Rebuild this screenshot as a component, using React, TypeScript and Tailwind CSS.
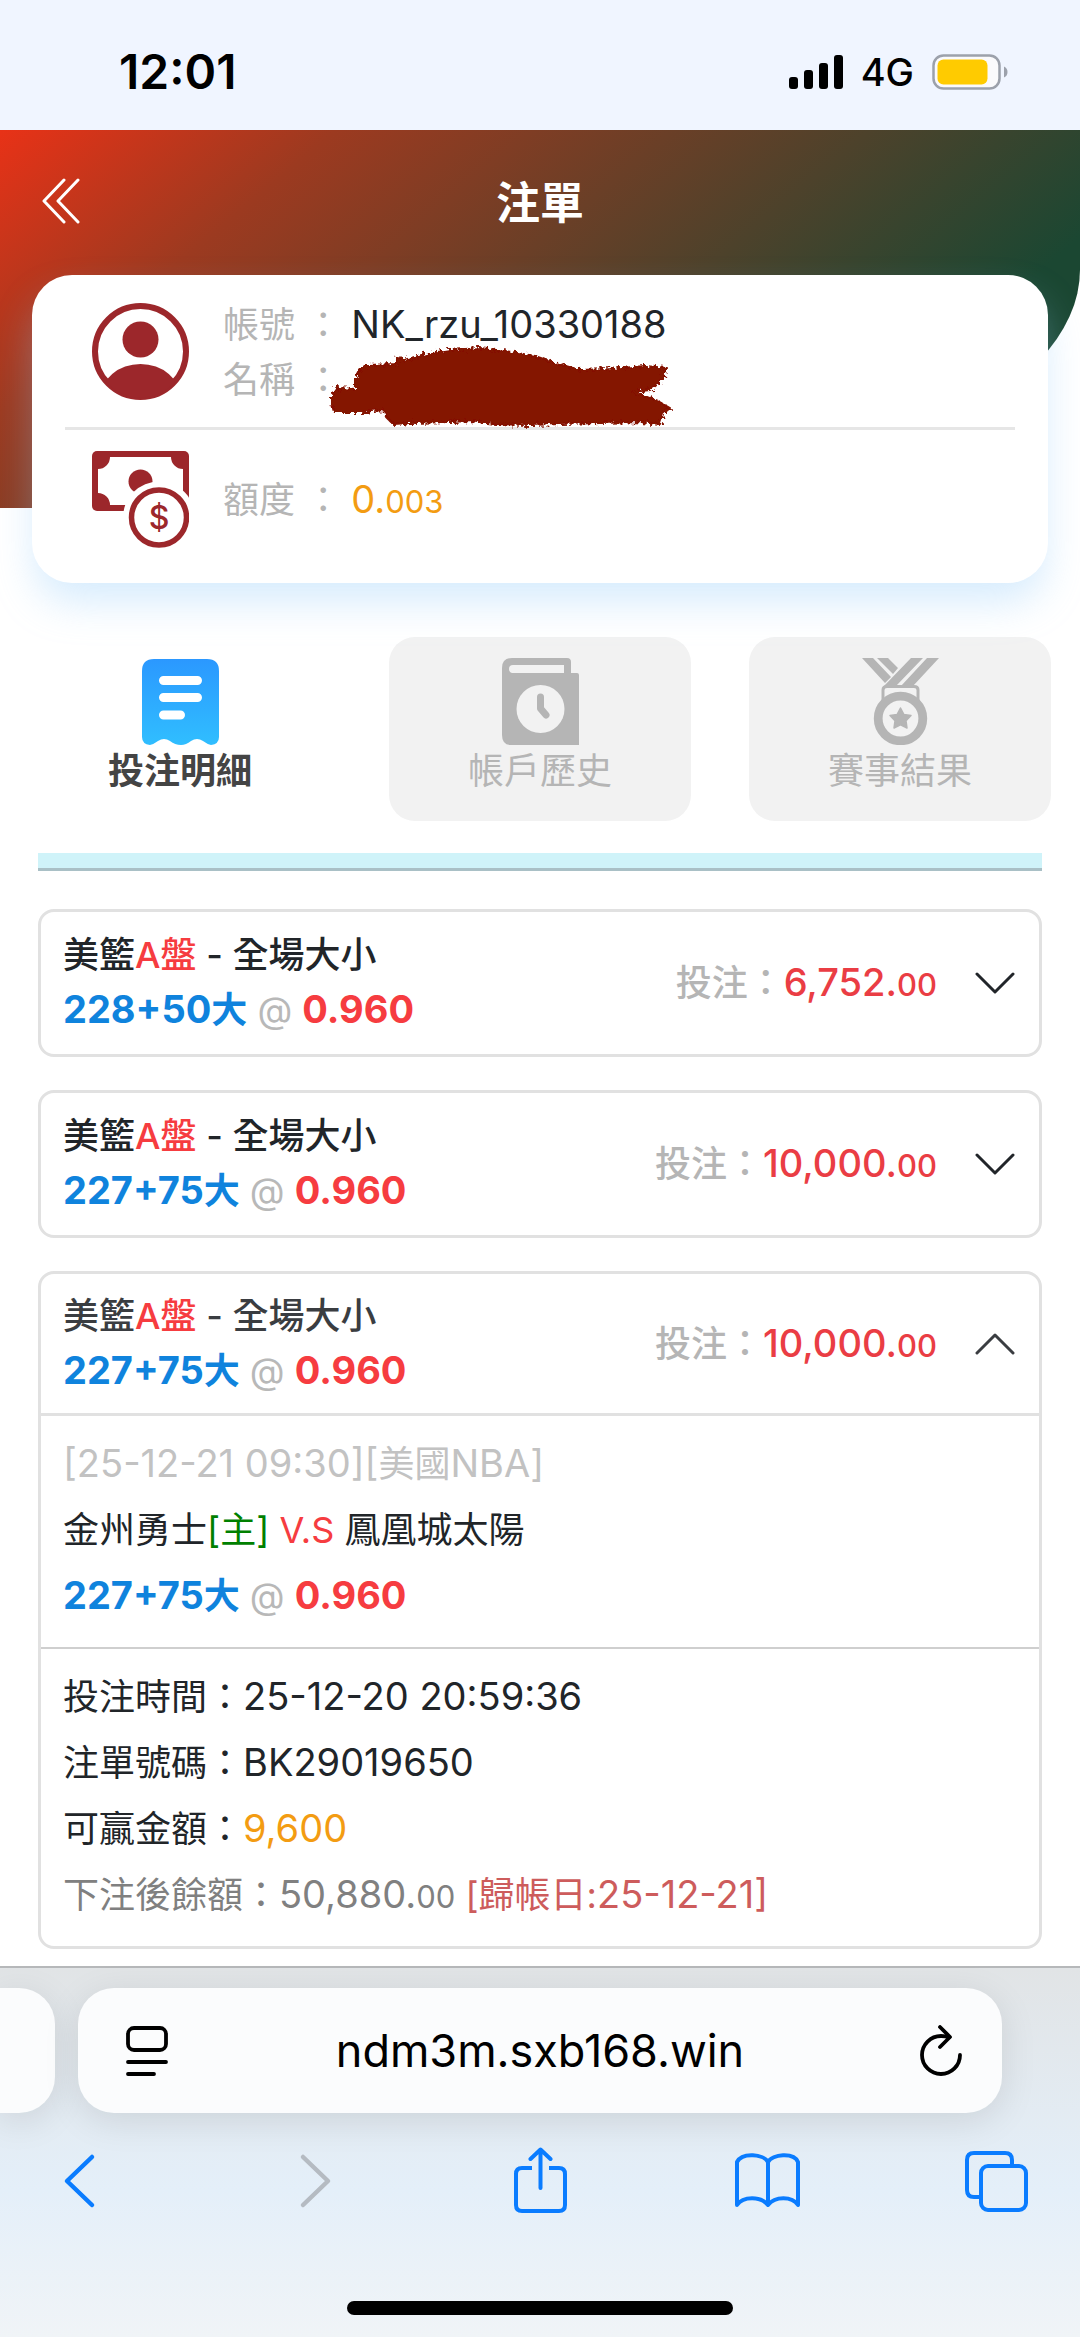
import { useState, type ReactNode } from "react";

const tabs = [
  { id: "detail", label: "投注明細", icon: ReceiptIcon },
  { id: "history", label: "帳戶歷史", icon: HistoryIcon },
  { id: "result", label: "賽事結果", icon: MedalIcon },
];

const bets = [
  { id: 1, line: "228+50", odds: "0.960", amount: "6,752" },
  { id: 2, line: "227+75", odds: "0.960", amount: "10,000" },
  { id: 3, line: "227+75", odds: "0.960", amount: "10,000" },
];

function UserIcon() {
  return (
    <svg viewBox="0 0 97 97" className="size-[97px] shrink-0" aria-hidden="true">
      <clipPath id="user-clip">
        <circle cx="48.5" cy="48.5" r="46" />
      </clipPath>
      <circle cx="48.5" cy="48.5" r="45.5" fill="none" stroke="#9c272b" strokeWidth="6" />
      <circle cx="48.5" cy="36.5" r="18" fill="#9c272b" />
      <ellipse cx="48.5" cy="95" rx="40" ry="34" fill="#9c272b" clipPath="url(#user-clip)" />
    </svg>
  );
}

function MoneyIcon() {
  return (
    <svg viewBox="0 0 97 97" className="size-[97px] shrink-0" aria-hidden="true">
      <rect width="97" height="60" rx="5" fill="#9c272b" />
      <path d="M18 6H79A12 12 0 0 0 91 18V42A12 12 0 0 0 79 54H18A12 12 0 0 0 6 42V18A12 12 0 0 0 18 6Z" fill="#fff" />
      <circle cx="48.5" cy="30.5" r="12" fill="#9c272b" />
      <circle cx="67" cy="66.5" r="36" fill="#fff" />
      <circle cx="67" cy="66.5" r="27.5" fill="#fff" stroke="#9c272b" strokeWidth="5.5" />
      <text x="67" y="78" textAnchor="middle" fontSize="32" fontWeight="500" fill="#9c272b">$</text>
    </svg>
  );
}

function ReceiptIcon() {
  return (
    <svg viewBox="0 0 77 87" className="h-[87px] w-[77px]" aria-hidden="true">
      <defs>
        <linearGradient id="receipt" x1="0" y1="0" x2="0" y2="1">
          <stop offset="0" stopColor="#2b98ff" />
          <stop offset="1" stopColor="#30beff" />
        </linearGradient>
      </defs>
      <path
        d="M0 13Q0 1 12 1H65Q77 1 77 13V79Q77 86 69 87Q65 86 61 83Q55 79 49 83Q44 87 39 87Q33 87 28 83Q22 79 16 83Q12 86 8 87Q0 86 0 79Z"
        fill="url(#receipt)"
      />
      <path d="M21.5 22.5H55.5M21.5 39.5H55.5M21.5 57H38.5" stroke="#fff" strokeWidth="9" strokeLinecap="round" />
    </svg>
  );
}

function HistoryIcon() {
  return (
    <svg viewBox="0 0 77 87" className="h-[87px] w-[77px]" aria-hidden="true">
      <path
        d="M10 0H65Q69 0 69 4V15H75Q77 15 77 17V87H9Q0 87 0 77V10Q0 0 10 0Z"
        fill="#b5b5b5"
      />
      <path d="M62 7V15H10Q7 14 7 11Q7 7 11 7Z" fill="#f2f2f2" />
      <circle cx="38.5" cy="51" r="24" fill="#f2f2f2" />
      <path d="M38.5 39V50.5L44 57" fill="none" stroke="#b5b5b5" strokeWidth="7" strokeLinecap="round" strokeLinejoin="round" />
    </svg>
  );
}

function MedalIcon() {
  return (
    <svg viewBox="0 0 77 87" className="h-[87px] w-[77px]" fill="#b5b5b5" aria-hidden="true">
      <path d="M0 0H11L29 19L23 25ZM15 0H26L36 10L31 16ZM49 0H61L34 28H22ZM65 0H77L51 28H39Z" />
      <path d="M21 42V32Q21 28.5 25 28.5H52Q56 28.5 56 32V42" fill="none" stroke="#b5b5b5" strokeWidth="3" />
      <circle cx="38.5" cy="60.5" r="22.3" fill="#f2f2f2" stroke="#b5b5b5" strokeWidth="8.8" />
      <path
        d="M38.5 50L41.8 56.4L49 57.5L44 62.8L45 70L38.5 66.8L32 70L33 62.8L28 57.5L35.2 56.4Z"
        stroke="#b5b5b5"
        strokeWidth="1.5"
        strokeLinejoin="round"
      />
    </svg>
  );
}

function Scribble() {
  return (
    <svg viewBox="0 0 400 120" className="absolute left-[268px] top-[55px] h-[120px] w-[400px]" aria-hidden="true">
      <filter id="rough" x="-5%" y="-10%" width="110%" height="120%">
        <feTurbulence type="fractalNoise" baseFrequency="0.28" numOctaves="2" seed="4" />
        <feDisplacementMap in="SourceGraphic" scale="9" />
      </filter>
      <path
        filter="url(#rough)"
        fill="#841200"
        stroke="#841200"
        strokeWidth="2"
        strokeLinejoin="round"
        d="M32 64L36 58L56 59L56 46L60 38L68 35L96 34L98 27L104 30L125 24L150 20L180 18L205 21L235 26L255 33L280 40L310 39L345 36L367 38L365 44L358 54L350 60L332 62L346 66L358 71L370 78L363 84L360 94L340 92L300 93L260 94L230 95L195 94L170 91L150 92L110 93L93 94L87 88L84 80L60 82L34 82L32 75Z"
      />
    </svg>
  );
}

// digits and latin run a little larger than the surrounding CJK
function Num({ children }: { children: ReactNode }) {
  return <span className="text-[38px] leading-none">{children}</span>;
}

function Decimals({ children }: { children: ReactNode }) {
  return <span className="text-[31px] leading-none">{children}</span>;
}

function StatusBar() {
  return (
    <div className="flex h-[130px] items-center justify-between bg-[#f0f5ff] pl-[119px] pr-[72px] pt-[14px]">
      <span className="text-[48px] font-semibold leading-none text-black">12:01</span>
      <div className="flex items-center gap-[18px]">
        <svg viewBox="0 0 54 34" className="h-[34px] w-[54px]" aria-hidden="true">
          <rect x="0" y="22" width="9" height="12" rx="3" />
          <rect x="15" y="15" width="9" height="19" rx="3" />
          <rect x="30" y="8" width="9" height="26" rx="3" />
          <rect x="45" y="0" width="9" height="34" rx="3" />
        </svg>
        <span className="text-[38px] font-medium leading-none text-black">4G</span>
        <svg viewBox="0 0 76 36" className="h-[36px] w-[76px]" aria-hidden="true">
          <rect x="1.5" y="1.5" width="66" height="33" rx="10" fill="#fafafc" stroke="#9ca1ab" strokeWidth="2.5" />
          <rect x="5.5" y="5.5" width="50" height="25" rx="6" fill="#ffcb00" />
          <path d="M72 12.5Q75.5 14 75.5 18T72 23.5Z" fill="#9ca1ab" />
        </svg>
      </div>
    </div>
  );
}

function Pick({ line, odds }: { line: string; odds: string }) {
  return (
    <>
      <span className="font-bold text-[#0f83dd]">
        <Num>{line}</Num>大
      </span>
      <span className="text-[#b8b8b8]"> @ </span>
      <span className="font-bold text-[#f63c40]">
        <Num>{odds}</Num>
      </span>
    </>
  );
}

function BetDetail({ line, odds }: { line: string; odds: string }) {
  return (
    <div className="text-4xl leading-[66px]">
      <div className="border-t-[3px] border-[#e1e1e1] px-[22px] pb-[18px] pt-[15px]">
        <p className="text-[#c2c2c2]">
          <Num>[25-12-21 09:30][</Num>美國<Num>NBA]</Num>
        </p>
        <p>
          金州勇士<span className="text-[#008000]">[主]</span> <span className="text-[#f63c40]">V.S</span> 鳳凰城太陽
        </p>
        <p>
          <Pick line={line} odds={odds} />
        </p>
      </div>
      <div className="border-t-2 border-[#cfcfcf] px-[22px] pb-[18px] pt-[15px]">
        <p>投注時間：<Num>25-12-20 20:59:36</Num></p>
        <p>注單號碼：<Num>BK29019650</Num></p>
        <p>
          可贏金額：<span className="text-[#f39c12]"><Num>9,600</Num></span>
        </p>
        <p className="text-[#808080]">
          下注後餘額：<Num>50,880.</Num><Decimals>00</Decimals>{" "}
          <span className="text-[#cd5c5c]">[歸帳日:<Num>25-12-21]</Num></span>
        </p>
      </div>
    </div>
  );
}

function BrowserBar() {
  return (
    <footer className="border-t-2 border-[#b6b8ba] bg-linear-to-b from-[#e1e4e6] via-[#e4eff9] via-60% to-[#f0f4f7] text-[#0a7cff]">
      <div className="flex gap-[23px] pr-[78px] pt-5">
        <div className="h-[125px] w-[55px] rounded-r-[36px] bg-[#fbfcfd] shadow-[0_8px_36px_rgba(0,0,0,0.1)]" />
        <div className="flex h-[125px] flex-1 items-center justify-between rounded-[36px] bg-[#fbfcfd] px-10 text-black shadow-[0_8px_36px_rgba(0,0,0,0.1)]">
          <button aria-label="Page menu" className="flex w-[50px] justify-end">
            <svg viewBox="0 0 42 50" className="h-[50px] w-[42px]" fill="none" stroke="currentColor" strokeWidth="3.8" strokeLinecap="round">
              <rect x="2" y="2" width="38" height="22" rx="6" />
              <path d="M2 36H40M2 48H28" />
            </svg>
          </button>
          <a href="#" className="text-[45px] leading-none">ndm3m.sxb168.win</a>
          <button aria-label="Reload" className="flex w-[50px] justify-end">
            <svg viewBox="0 0 42 52" className="h-[52px] w-[42px]" fill="none" stroke="currentColor" strokeWidth="3.8" strokeLinecap="round" strokeLinejoin="round">
              <path d="M29 12.5C26 11 23.5 11 21 11A19 19 0 1 0 40 30" />
              <path d="M20 2L30 12L20 22" />
            </svg>
          </button>
        </div>
      </div>
      <nav className="flex justify-between pl-[47px] pr-[51px] pt-[34px]">
        <button aria-label="Back">
          <svg viewBox="0 0 66 66" className="size-[66px]" fill="none" stroke="currentColor" strokeWidth="4.5" strokeLinecap="round" strokeLinejoin="round">
            <path d="M45 10L20 34L45 58" />
          </svg>
        </button>
        <button aria-label="Forward" className="text-[#b5bbc2]">
          <svg viewBox="0 0 66 66" className="size-[66px]" fill="none" stroke="currentColor" strokeWidth="4.5" strokeLinecap="round" strokeLinejoin="round">
            <path d="M27 10L52 34L27 58" />
          </svg>
        </button>
        <button aria-label="Share">
          <svg viewBox="0 0 66 66" className="size-[66px]" fill="none" stroke="currentColor" strokeWidth="4" strokeLinecap="round" strokeLinejoin="round">
            <path d="M27 21H17Q11 21 11 27V58Q11 64 17 64H54Q60 64 60 58V27Q60 21 54 21H44" strokeLinecap="butt" />
            <path d="M35.5 41V3M25.5 12L35.5 2.5L45.5 12" />
          </svg>
        </button>
        <button aria-label="Bookmarks">
          <svg viewBox="0 0 66 66" className="size-[66px]" fill="none" stroke="currentColor" strokeWidth="4" strokeLinejoin="round">
            <path d="M34 15C30 7 8 5 3 15V58C9 49 27 49 34 58C41 49 58 49 64 58V15C60 5 38 7 34 15V58" />
          </svg>
        </button>
        <button aria-label="Tabs">
          <svg viewBox="0 0 66 66" className="size-[66px]" fill="none" stroke="currentColor" strokeWidth="4">
            <rect x="18" y="19" width="45" height="44" rx="7" />
            <path d="M18 50H11Q4 50 4 43V13Q4 6 11 6H42Q49 6 49 13V19" />
          </svg>
        </button>
      </nav>
      <div className="mx-auto mb-[22px] mt-[88px] h-[14px] w-[386px] rounded-full bg-black" />
    </footer>
  );
}

export default function App() {
  const [activeTab, setActiveTab] = useState("detail");
  const [openBet, setOpenBet] = useState<number | null>(3);

  return (
    <div className="flex min-h-screen flex-col bg-white font-['Inter','Noto_Sans_CJK_TC',sans-serif] text-[#212529]">
      <StatusBar />

      <header className="rounded-br-[50%_63%] bg-[linear-gradient(140deg,#e83217_0%,#9c3a20_22%,#1b4732_79%)] px-8">
        <div className="flex h-[145px] items-center justify-between">
          <button aria-label="返回" className="w-16 pb-1 pl-2">
            <svg viewBox="0 0 40 46" className="h-[46px] w-10" fill="none" stroke="#fff" strokeWidth="3" strokeLinecap="round" strokeLinejoin="round">
              <path d="M24 2L4 23L24 44M38 2L18 23L38 44" />
            </svg>
          </button>
          <h1 className="text-[44px] font-bold text-white">注單</h1>
          <div className="w-16" />
        </div>

        <section className="relative -mb-[75px] rounded-[40px] bg-white px-[33px] text-4xl shadow-[0_22px_40px_-4px_rgba(150,205,250,0.4)]">
          <div className="flex h-[155px] items-center gap-[34px] border-b-[3px] border-[#e6e6e6] pl-[27px]">
            <UserIcon />
            <div className="pt-1 leading-[55px]">
              <p>
                <span className="text-[#b5b5b5]">帳號 ：</span> <Num>NK_rzu_10330188</Num>
              </p>
              <p className="text-[#b5b5b5]">名稱 ：</p>
            </div>
          </div>
          <Scribble />
          <div className="flex h-[153px] items-center gap-[34px] pb-[14px] pl-[27px]">
            <MoneyIcon />
            <p>
              <span className="text-[#b5b5b5]">額度 ：</span>{" "}
              <span className="text-[#f39c12]">
                <Num>0.</Num><Decimals>003</Decimals>
              </span>
            </p>
          </div>
        </section>
      </header>

      <main className="flex-1 pb-4 pt-[129px]">
        <nav className="grid grid-cols-3">
          {tabs.map((tab) => (
            <button
              key={tab.id}
              onClick={() => setActiveTab(tab.id)}
              className={`mx-[29px] flex h-[184px] flex-col items-center rounded-[26px] pt-[21px] text-4xl ${
                activeTab === tab.id ? "font-bold text-[#444]" : "bg-[#f2f2f2] text-[#b5b5b5]"
              }`}
            >
              <tab.icon />
              <span className="leading-[52px]">{tab.label}</span>
            </button>
          ))}
        </nav>

        <div className="mx-[38px] mt-8 h-[18px] border-b-[3px] border-[#a9c0c6] bg-[#cff3f9]" />

        <div className="mx-[38px] mt-[38px] flex flex-col gap-[33px]">
          {bets.map((bet) => {
            const open = openBet === bet.id;
            return (
              <article key={bet.id} className="rounded-2xl border-[3px] border-[#e1e1e1]">
                <button
                  onClick={() => setOpenBet(open ? null : bet.id)}
                  aria-expanded={open}
                  className={`flex w-full items-center justify-between pl-[22px] pr-6 text-left text-4xl ${
                    open ? "h-[139px] text-[#3a3d41]" : "h-[142px]"
                  }`}
                >
                  <div className="leading-[55px]">
                    <p className="font-medium">
                      美籃<span className="text-[#f63c40]">A盤</span> - 全場大小
                    </p>
                    <p>
                      <Pick line={bet.line} odds={bet.odds} />
                    </p>
                  </div>
                  <div className="flex items-center gap-[38px] font-medium">
                    <p>
                      <span className="text-[#b5b5b5]">投注：</span>
                      <span className="text-[#ea3d44]">
                        <Num>{bet.amount}.</Num><Decimals>00</Decimals>
                      </span>
                    </p>
                    <svg viewBox="0 0 40 22" className="h-[22px] w-10" fill="none" stroke="currentColor" strokeWidth="3" strokeLinecap="round" strokeLinejoin="round" aria-hidden="true">
                      <path d={open ? "M2 20L20 2L38 20" : "M2 2L20 20L38 2"} />
                    </svg>
                  </div>
                </button>
                {open && <BetDetail line={bet.line} odds={bet.odds} />}
              </article>
            );
          })}
        </div>
      </main>

      <BrowserBar />
    </div>
  );
}
